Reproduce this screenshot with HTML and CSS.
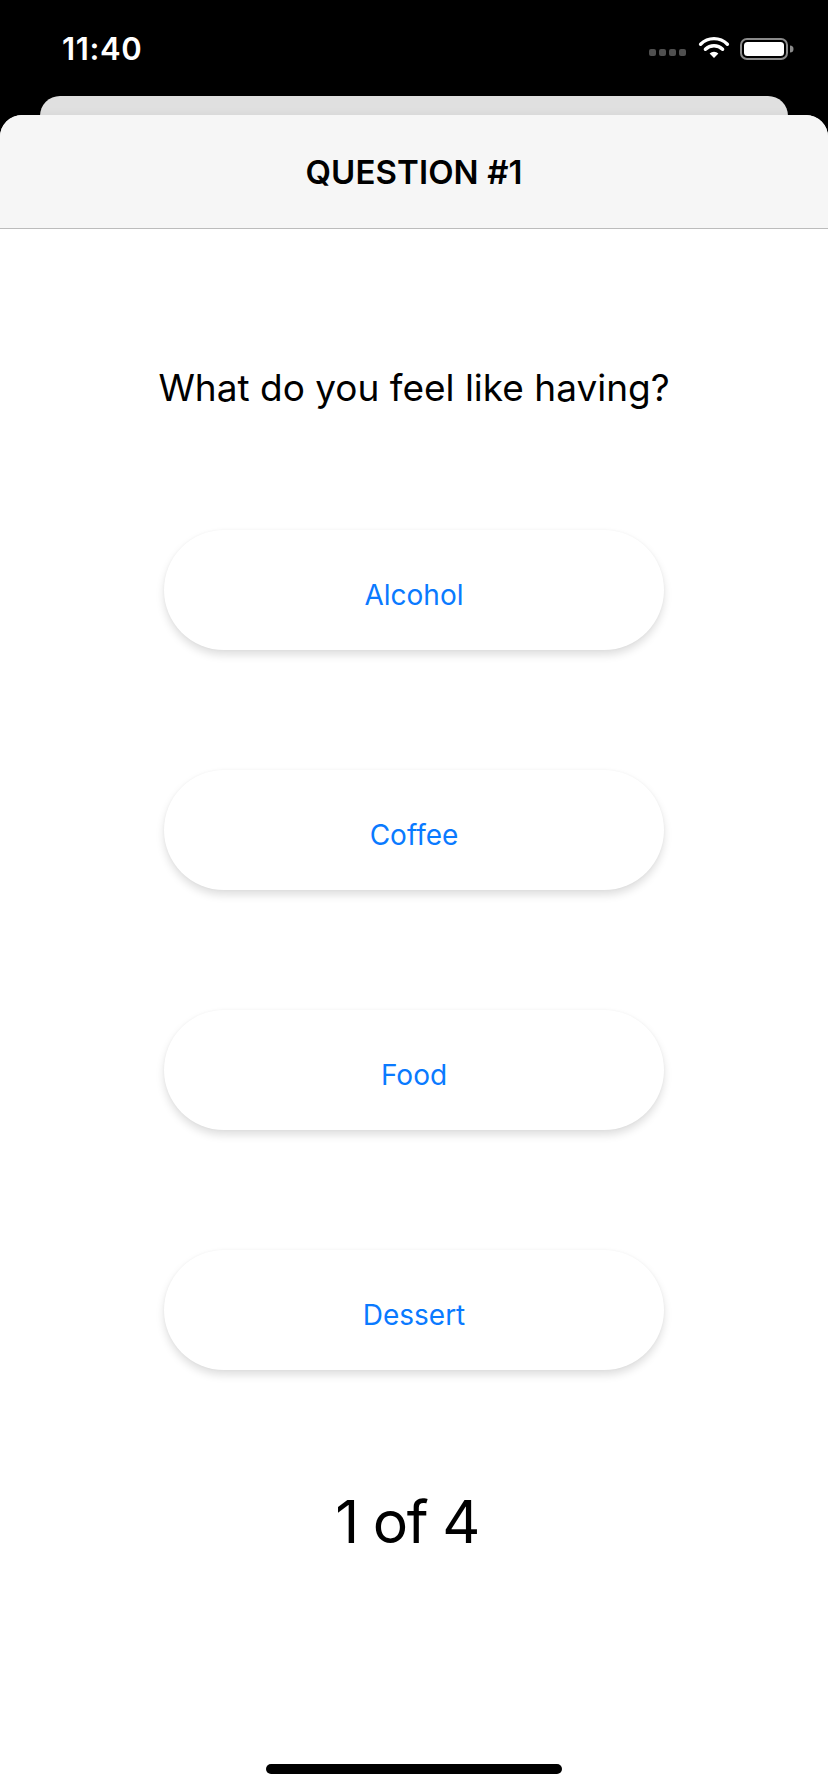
FILE: index.html
```html
<!DOCTYPE html>
<html>
<head>
<meta charset="utf-8">
<link rel="stylesheet" href="styles.css">
</head>
<body>
<div class="screen">
  <div class="status">
    <span class="time">11:40</span>
    <div class="status-icons">
      <div class="signal"><i></i><i></i><i></i><i></i></div>
      <svg class="wifi" width="32" height="24" viewBox="0 0 32 24">
        <path d="M16 22 L11.6 17.4 A6.5 6.5 0 0 1 20.4 17.4 Z" fill="#fff"/>
        <path d="M7.4 13.2 A12.3 12.3 0 0 1 24.6 13.2" fill="none" stroke="#fff" stroke-width="3.4" stroke-linecap="round"/>
        <path d="M2.6 8.2 A19 19 0 0 1 29.4 8.2" fill="none" stroke="#fff" stroke-width="3.4" stroke-linecap="round"/>
      </svg>
      <svg class="battery" width="54" height="22" viewBox="0 0 54 22">
        <rect x="1" y="1" width="46" height="20" rx="6" fill="none" stroke="#8a8a8a" stroke-width="2"/>
        <rect x="4" y="4" width="40" height="14" rx="3.5" fill="#fff"/>
        <path d="M50 7.5 A3.5 3.5 0 0 1 50 14.5 Z" fill="#8a8a8a"/>
      </svg>
    </div>
  </div>
  <div class="back-card"></div>
  <div class="sheet">
    <div class="nav">QUESTION #1</div>
    <div class="content">
      <p class="question">What do you feel like having?</p>
      <div class="answers">
        <button class="answer">Alcohol</button>
        <button class="answer">Coffee</button>
        <button class="answer">Food</button>
        <button class="answer">Dessert</button>
      </div>
      <p class="progress">1 of 4</p>
    </div>
    <div class="home-indicator"></div>
  </div>
</div>
</body>
</html>
```

FILE: styles.css
```css
* { box-sizing: border-box; }
html, body {
  margin: 0;
  padding: 0;
  background: #000;
}
body {
  font-family: Inter, "Noto Sans", "Liberation Sans", sans-serif;
  width: 828px;
  height: 1792px;
  overflow: hidden;
}
.screen {
  display: flex;
  flex-direction: column;
  height: 1792px;
}
.status {
  height: 96px;
  display: flex;
  justify-content: space-between;
  align-items: flex-start;
  padding: 30px 34px 0 62px;
  color: #fff;
}
.time {
  font-size: 31px;
  font-weight: 600;
  letter-spacing: 0.6px;
  line-height: 38px;
}
.status-icons {
  display: flex;
  align-items: center;
  gap: 10px;
  height: 38px;
}
.signal {
  display: flex;
  gap: 3px;
  margin-right: 2px;
  margin-top: 7px;
}
.signal i {
  width: 7px;
  height: 7px;
  border-radius: 2px;
  background: #4f4f4f;
  display: block;
}
.wifi { margin-top: -2px; }
.back-card {
  height: 40px;
  margin: 0 40px -21px;
  background: #e0e0e0;
  border-radius: 20px 20px 0 0;
}
.sheet {
  position: relative;
  flex: 1;
  background: #fff;
  border-radius: 22px 22px 0 0;
  overflow: hidden;
  display: flex;
  flex-direction: column;
  box-shadow: -2px 0 10px rgba(0,0,0,0.06);
}
.nav {
  height: 114px;
  background: #f6f6f6;
  border-bottom: 1px solid #bcbcbc;
  display: flex;
  align-items: center;
  justify-content: center;
  font-size: 33px;
  font-weight: 600;
  color: #000;
  letter-spacing: 0.1px;
}
.content {
  display: flex;
  flex-direction: column;
  align-items: center;
  padding-top: 137px;
}
.question {
  margin: 0;
  font-size: 37px;
  line-height: 44px;
  color: #000;
}
.answers {
  display: flex;
  flex-direction: column;
  gap: 120px;
  margin-top: 120px;
}
.answer {
  width: 500px;
  height: 120px;
  border: none;
  border-radius: 60px;
  background: #fff;
  box-shadow: 0 5px 9px rgba(0,0,0,0.13), 0 0 3px rgba(0,0,0,0.04);
  font-family: Inter, "Noto Sans", "Liberation Sans", sans-serif;
  font-size: 28px;
  color: #0a7aff;
  padding: 0;
  padding-top: 10px;
}
.progress {
  margin: 114px 14px 0 0;
  font-size: 59px;
  letter-spacing: -1.5px;
  line-height: 76px;
  color: #000;
}
.home-indicator {
  position: absolute;
  left: 266px;
  bottom: 18px;
  width: 296px;
  height: 10px;
  border-radius: 5px;
  background: #000;
}
```
